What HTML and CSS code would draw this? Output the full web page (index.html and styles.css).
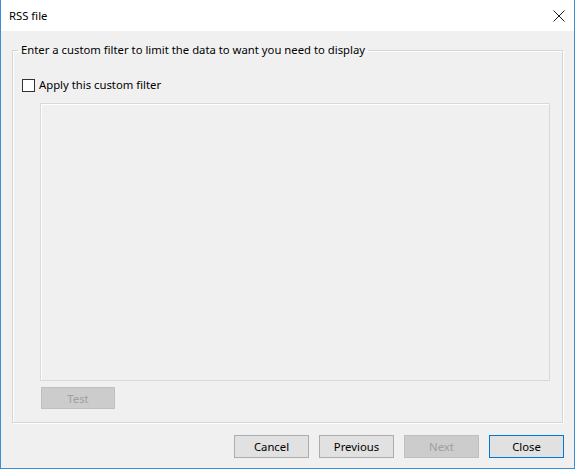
FILE: index.html
```html
<!DOCTYPE html>
<html lang="en">
<head>
    <meta charset="UTF-8">
    <title>RSS file</title>
    <link rel="stylesheet" href="styles.css">
</head>
<body>
    <div id="dialog">
        <div id="title-bar">
            <span id="title">RSS file</span>
            <button id="close-x" type="button" aria-label="Close">
                <svg width="12" height="12" viewBox="0 0 12 12">
                    <path d="M0.5 0.5 L11.5 11.5 M11.5 0.5 L0.5 11.5" stroke="#1a1a1a" stroke-width="1" fill="none"/>
                </svg>
            </button>
        </div>
        <div id="client">
            <fieldset id="filter-group">
                <legend>Enter a custom filter to limit the data to want you need to display</legend>
                <label class="check-row">
                    <span class="check-box"></span>
                    <span>Apply this custom filter</span>
                </label>
                <textarea id="filter-text" disabled></textarea>
                <div class="test-row">
                    <button class="btn" type="button" disabled>Test</button>
                </div>
            </fieldset>
            <div id="button-row">
                <button class="btn" type="button">Cancel</button>
                <button class="btn" type="button">Previous</button>
                <button class="btn" type="button" disabled>Next</button>
                <button class="btn btn-default" type="button">Close</button>
            </div>
        </div>
    </div>
</body>
</html>
```

FILE: styles.css
```css
/* Dialog window */
body {
    margin: 0;
    padding: 0;
    background: #f0f0f0;
    font-family: "Noto Sans", "Open Sans", sans-serif;
    font-size: 11.3px;
    color: #000000;
}

#dialog {
    box-sizing: border-box;
    width: 575px;
    height: 469px;
    display: flex;
    flex-direction: column;
    background: #f0f0f0;
    border: 1px solid #3a8ed4;
    border-top: none;
}

#title-bar {
    height: 31px;
    display: flex;
    align-items: center;
    justify-content: space-between;
    background: #ffffff;
    padding: 0 0 0 8px;
}

#title {
    line-height: 16px;
}

#close-x {
    width: 46px;
    height: 31px;
    border: 0;
    padding: 0 0 0 16px;
    background: transparent;
    display: flex;
    align-items: center;
    justify-content: center;
}

#client {
    flex: 1;
    display: flex;
    flex-direction: column;
    padding: 11px 11px 0 11px;
}

/* Group box */
#filter-group {
    margin: 0;
    padding: 0 12px 11px 5px;
    height: 381px;
    box-sizing: border-box;
    border: 1px solid #d5d5d5;
    box-shadow: inset 1px 1px 0 #ffffff, 1px 1px 0 #ffffff;
    display: flex;
    flex-direction: column;
}

#filter-group legend {
    padding: 0 3px;
    line-height: 16px;
}

.check-row {
    display: flex;
    align-items: center;
    gap: 4px;
    margin: 19px 0 0 4px;
    line-height: 16px;
}

.check-box {
    width: 11px;
    height: 11px;
    border: 1px solid #333333;
    background: #ffffff;
}

#filter-text {
    margin: 10px 0 0 22px;
    height: 278px;
    box-sizing: border-box;
    resize: none;
    border: 1px solid #d9d9d9;
    background: #f0f0f0;
    box-shadow: inset 1px 1px 0 #ffffff;
}

.test-row {
    margin: 6px 0 0 23px;
}

/* Push buttons */
.btn {
    box-sizing: border-box;
    width: 74px;
    height: 22px;
    padding: 0;
    font-family: inherit;
    font-size: 11.3px;
    color: #000000;
    background: #e1e1e1;
    border: 1px solid #adadad;
}

.btn:disabled {
    color: #a0a0a0;
    background: #cccccc;
    border-color: #bfbfbf;
}

.btn-default {
    border-color: #0078d7;
}

#button-row {
    display: flex;
    justify-content: flex-end;
    gap: 10px;
    padding: 12px 0 0 0;
    margin-right: -1px;
}

#button-row .btn {
    width: 75px;
    height: 23px;
}
```
